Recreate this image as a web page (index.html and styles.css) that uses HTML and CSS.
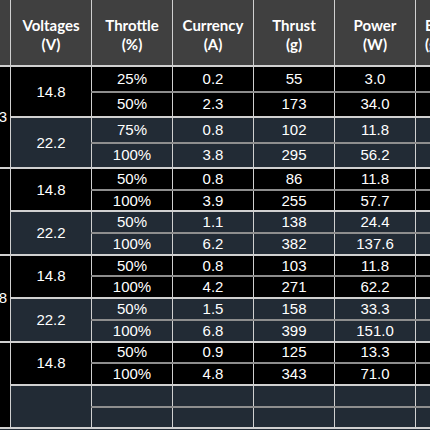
FILE: index.html
```html
<!DOCTYPE html>
<html lang="en">
  <head>
    <meta charset="UTF-8" />
    <meta name="viewport" content="width=device-width, initial-scale=1.0" />
    <title>Motor Test Data</title>
    <link rel="stylesheet" href="styles.css">
  </head>
  <body>
    <table class="data">
      <colgroup>
        <col class="c-motor" />
        <col /><col /><col /><col /><col /><col />
      </colgroup>
      <thead>
        <tr>
          <th class="motor">Motor</th>
          <th>Voltages<br />(V)</th>
          <th>Throttle<br />(%)</th>
          <th>Currency<br />(A)</th>
          <th>Thrust<br />(g)</th>
          <th>Power<br />(W)</th>
          <th class="eff">Efficiency<br />(g/W)</th>
        </tr>
      </thead>
      <tbody>
        <!-- group 1 -->
        <tr class="big pair-top dark">
          <td class="motor span" rowspan="4">2213</td>
          <td class="span" rowspan="2">14.8</td>
          <td>25%</td><td>0.2</td><td>55</td><td>3.0</td><td>18.3</td>
        </tr>
        <tr class="big dark">
          <td>50%</td><td>2.3</td><td>173</td><td>34.0</td><td>5.1</td>
        </tr>
        <tr class="big pair-top blue">
          <td class="span" rowspan="2">22.2</td>
          <td>75%</td><td>0.8</td><td>102</td><td>11.8</td><td>8.6</td>
        </tr>
        <tr class="big blue">
          <td>100%</td><td>3.8</td><td>295</td><td>56.2</td><td>5.2</td>
        </tr>

        <!-- group 2 -->
        <tr class="pair-top dark">
          <td class="motor span" rowspan="4"></td>
          <td class="span" rowspan="2">14.8</td>
          <td>50%</td><td>0.8</td><td>86</td><td>11.8</td><td>7.3</td>
        </tr>
        <tr class="dark">
          <td>100%</td><td>3.9</td><td>255</td><td>57.7</td><td>4.4</td>
        </tr>
        <tr class="pair-top blue">
          <td class="span" rowspan="2">22.2</td>
          <td>50%</td><td>1.1</td><td>138</td><td>24.4</td><td>5.7</td>
        </tr>
        <tr class="blue">
          <td>100%</td><td>6.2</td><td>382</td><td>137.6</td><td>2.8</td>
        </tr>

        <!-- group 3 -->
        <tr class="pair-top dark">
          <td class="motor span" rowspan="4">2208</td>
          <td class="span" rowspan="2">14.8</td>
          <td>50%</td><td>0.8</td><td>103</td><td>11.8</td><td>8.7</td>
        </tr>
        <tr class="dark">
          <td>100%</td><td>4.2</td><td>271</td><td>62.2</td><td>4.4</td>
        </tr>
        <tr class="pair-top blue">
          <td class="span" rowspan="2">22.2</td>
          <td>50%</td><td>1.5</td><td>158</td><td>33.3</td><td>4.7</td>
        </tr>
        <tr class="blue">
          <td>100%</td><td>6.8</td><td>399</td><td>151.0</td><td>2.6</td>
        </tr>

        <!-- group 4 -->
        <tr class="pair-top dark">
          <td class="motor span" rowspan="4"></td>
          <td class="span" rowspan="2">14.8</td>
          <td>50%</td><td>0.9</td><td>125</td><td>13.3</td><td>9.4</td>
        </tr>
        <tr class="dark">
          <td>100%</td><td>4.8</td><td>343</td><td>71.0</td><td>4.8</td>
        </tr>
        <tr class="pair-top blue">
          <td class="span" rowspan="2"></td>
          <td></td><td></td><td></td><td></td><td></td>
        </tr>
        <tr class="blue">
          <td></td><td></td><td></td><td></td><td></td>
        </tr>
      </tbody>
    </table>
  </body>
</html>
```

FILE: styles.css
```css
body {
  margin: 0;
  padding: 0;
  width: 430px;
  height: 430px;
  overflow: hidden;
  background-color: #222b35;
  font-family: "Liberation Sans", Arial, sans-serif;
}

.data {
  margin-left: -60px;
  border-collapse: collapse;
  table-layout: fixed;
  width: 556px;
  color: white;
}

.data col {
  width: 81px;
}

.data col.c-motor {
  width: 70px;
}

.data th,
.data td {
  padding: 0;
  text-align: center;
  vertical-align: middle;
  border-style: solid;
  border-color: #d0d0d0;
  border-width: 2px 1px;
  overflow: hidden;
  white-space: nowrap;
}

.data thead tr {
  height: 66px;
}

.data th {
  background-color: #404040;
  font-family: Lato, "Open Sans", sans-serif;
  font-weight: 700;
  font-size: 15px;
  line-height: 19px;
  padding-top: 4px;
  border-top-width: 0;
}

.data th.eff {
  text-align: left;
  padding-left: 9px;
}

.data td {
  font-size: 15px;
  line-height: 16px;
}

.data tbody tr {
  height: 21.7px;
}

.data tbody tr.big {
  height: 25.5px;
}

.data td.motor {
  text-align: right;
  padding-right: 3px;
  background-color: #000;
}

.data th.motor {
  background-color: #404040;
}

.dark td {
  background-color: #000;
}

.blue td {
  background-color: #222b35;
}

/* softer line only between the two throttle rows of a pair */
.pair-top td {
  border-bottom-color: #8e8e8e;
}

.pair-top td.span {
  border-bottom-color: #d0d0d0;
}
```
